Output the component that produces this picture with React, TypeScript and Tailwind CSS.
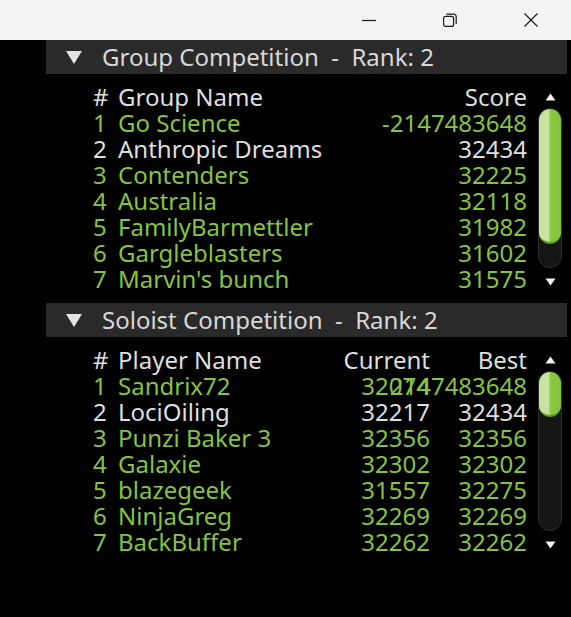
import React from "react";

const GREEN = "text-[#86c33e]";
const WHITE = "text-[#dedede]";

type GroupRow = { rank: number; name: string; score: string; me?: boolean };
type SoloRow = { rank: number; name: string; current: string; best: string; me?: boolean };

const groups: GroupRow[] = [
  { rank: 1, name: "Go Science", score: "-2147483648" },
  { rank: 2, name: "Anthropic Dreams", score: "32434", me: true },
  { rank: 3, name: "Contenders", score: "32225" },
  { rank: 4, name: "Australia", score: "32118" },
  { rank: 5, name: "FamilyBarmettler", score: "31982" },
  { rank: 6, name: "Gargleblasters", score: "31602" },
  { rank: 7, name: "Marvin's bunch", score: "31575" },
];

const soloists: SoloRow[] = [
  { rank: 1, name: "Sandrix72", current: "32074", best: "2147483648" },
  { rank: 2, name: "LociOiling", current: "32217", best: "32434", me: true },
  { rank: 3, name: "Punzi Baker 3", current: "32356", best: "32356" },
  { rank: 4, name: "Galaxie", current: "32302", best: "32302" },
  { rank: 5, name: "blazegeek", current: "31557", best: "32275" },
  { rank: 6, name: "NinjaGreg", current: "32269", best: "32269" },
  { rank: 7, name: "BackBuffer", current: "32262", best: "32262" },
];

function TitleBar() {
  return (
    <div className="flex h-[40px] shrink-0 justify-end bg-[#f3f3f3]">
      <div className="flex w-[81px] items-center justify-center">
        <svg width="16" height="16" viewBox="0 0 16 16">
          <path d="M1 8.5h14" stroke="#1a1a1a" strokeWidth="1.2" />
        </svg>
      </div>
      <div className="flex w-[81px] items-center justify-center">
        <svg width="16" height="16" viewBox="0 0 16 16" fill="none" stroke="#1a1a1a" strokeWidth="1.2">
          <rect x="1.6" y="4.4" width="10" height="10" rx="2" />
          <path d="M4.4 2.2h7.4a2.4 2.4 0 0 1 2.4 2.4v7.4" />
        </svg>
      </div>
      <div className="flex w-[81px] items-center justify-center">
        <svg width="16" height="16" viewBox="0 0 16 16">
          <path d="M1.5 1.5l13 13M14.5 1.5l-13 13" stroke="#1a1a1a" strokeWidth="1.2" />
        </svg>
      </div>
    </div>
  );
}

function SectionHeader({ title }: { title: string }) {
  return (
    <div className="flex h-[34px] items-center bg-[#2a2a2a] pl-[19px] text-[#d8d8d8]">
      <svg width="18" height="16" viewBox="0 0 18 16" className="shrink-0">
        <path d="M1 2h16L9 15z" fill="#e4e4e4" />
      </svg>
      <span className="ml-[19px] whitespace-pre">{title}</span>
    </div>
  );
}

function Arrow({ up }: { up?: boolean }) {
  return (
    <svg width="11" height="8" viewBox="0 0 11 8">
      <path d={up ? "M5.5 0.5L10.5 7.5H0.5z" : "M0.5 0.5h10L5.5 7.5z"} fill="#f2f2f2" />
    </svg>
  );
}

function Scrollbar({ thumb }: { thumb: number }) {
  return (
    <div className="ml-[11px] flex w-[24px] shrink-0 flex-col items-center">
      <div className="flex h-[24px] items-center justify-center pt-[2px]">
        <Arrow up />
      </div>
      <div className="flex h-[160px] w-[24px] flex-col rounded-full border border-[#2e2e2e] bg-[#151515]">
        <div
          className="w-full rounded-full border-b-2 border-[#5e9a22] bg-[linear-gradient(90deg,#c6e3a2_0%,#c6e3a2_45%,#8cc83f_50%,#84c341_100%)]"
          style={{ height: thumb }}
        />
      </div>
      <div className="flex h-[26px] items-center justify-center pt-[1px]">
        <Arrow />
      </div>
    </div>
  );
}

function Cell({ w, children }: { w: string; children: React.ReactNode }) {
  return (
    <div className={`flex shrink-0 justify-end ${w}`}>
      <span className="shrink-0 whitespace-nowrap">{children}</span>
    </div>
  );
}

function GroupTable() {
  return (
    <div className="flex pl-[47px] pt-[10px]">
      <div className="w-[434px]">
        <div className={`flex h-[26px] items-center ${WHITE}`}>
          <span className="w-[25px]">#</span>
          <span className="flex-1">Group Name</span>
          <span>Score</span>
        </div>
        {groups.map((g) => (
          <div key={g.rank} className={`flex h-[26px] items-center ${g.me ? WHITE : GREEN}`}>
            <span className="w-[25px] shrink-0">{g.rank}</span>
            <span className="flex-1 whitespace-nowrap">{g.name}</span>
            <span>{g.score}</span>
          </div>
        ))}
      </div>
      <Scrollbar thumb={135} />
    </div>
  );
}

function SoloTable() {
  return (
    <div className="flex pl-[47px] pt-[10px]">
      <div className="w-[434px]">
        <div className={`flex h-[26px] items-center ${WHITE}`}>
          <span className="w-[25px] shrink-0">#</span>
          <span className="flex-1">Player Name</span>
          <Cell w="w-[140px]">Current</Cell>
          <Cell w="w-[97px]">Best</Cell>
        </div>
        {soloists.map((p) => (
          <div key={p.rank} className={`flex h-[26px] items-center ${p.me ? WHITE : GREEN}`}>
            <span className="w-[25px] shrink-0">{p.rank}</span>
            <span className="flex-1 whitespace-nowrap">{p.name}</span>
            <Cell w="w-[140px]">{p.current}</Cell>
            <Cell w="w-[97px]">{p.best}</Cell>
          </div>
        ))}
      </div>
      <Scrollbar thumb={45} />
    </div>
  );
}

export default function App() {
  return (
    <div className="flex h-[617px] w-[571px] flex-col overflow-hidden bg-black font-['Noto_Sans',sans-serif] text-[24px] leading-[26px]">
      <TitleBar />
      <div className="pl-[46px] pr-[4px]">
        <SectionHeader title="Group Competition  -  Rank: 2" />
        <GroupTable />
        <div className="h-[9px]" />
        <SectionHeader title="Soloist Competition  -  Rank: 2" />
        <SoloTable />
      </div>
    </div>
  );
}
